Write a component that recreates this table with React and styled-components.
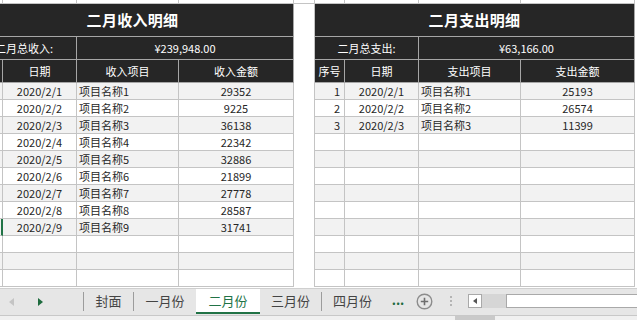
import React from 'react'
import styled, { createGlobalStyle, css } from 'styled-components'

const GlobalStyle = createGlobalStyle`
  body {
    margin: 0;
    background: #fff;
    font-family: "Noto Sans CJK SC", "Noto Sans", sans-serif;
  }
`

const income = [
  ['2020/2/1', '项目名称1', 29352],
  ['2020/2/2', '项目名称2', 9225],
  ['2020/2/3', '项目名称3', 36138],
  ['2020/2/4', '项目名称4', 22342],
  ['2020/2/5', '项目名称5', 32886],
  ['2020/2/6', '项目名称6', 21899],
  ['2020/2/7', '项目名称7', 27778],
  ['2020/2/8', '项目名称8', 28587],
  ['2020/2/9', '项目名称9', 31741],
]

const expense = [
  ['2020/2/1', '项目名称1', 25193],
  ['2020/2/2', '项目名称2', 26574],
  ['2020/2/3', '项目名称3', 11399],
]

const ROWS = 12
const LINE = '#c4c4c4'

const Page = styled.div`
  width: 637px;
  height: 320px;
  overflow: hidden;
  display: flex;
  flex-direction: column;
`

const Sheet = styled.div`
  height: 288px;
  overflow: hidden;
  display: flex;
  align-items: flex-start;
`

const LeftPane = styled.div`
  width: 294px;
  flex: none;
  overflow: hidden;
`

const Gap = styled.div`
  width: 20px;
  flex: none;
  height: 288px;
  display: flex;
  flex-direction: column;
  .strip {
    height: 3px;
    border-bottom: 1px solid ${LINE};
  }
`

const Table = styled.div`
  display: grid;
  grid-template-columns: ${p => p.$cols};
  grid-template-rows: 4px 33px 23px 23px repeat(${ROWS}, 17px);
  margin-left: ${p => p.$shift || 0}px;
  border-left: ${p => (p.$edge ? `1px solid ${LINE}` : 'none')};
  flex: none;
`

const Cell = styled.div`
  box-sizing: border-box;
  grid-column: span ${p => p.$span || 1};
  border-right: 1px solid ${LINE};
  border-bottom: 1px solid ${LINE};
  background: ${p => (p.$shade ? '#f2f2f2' : '#fff')};
  color: #262626;
  font-size: 11px;
  line-height: 16px;
  white-space: nowrap;
  overflow: hidden;
  display: flex;
  align-items: center;
  justify-content: ${p => p.$align || 'center'};
  padding: ${p => (p.$align === 'flex-end' ? '0 4px 0 0' : p.$align === 'flex-start' ? '0 0 0 2px' : '0')};
  ${p =>
    p.$dark &&
    css`
      background: #262626;
      color: #fff;
      border-color: #a6a6a6;
    `}
  ${p =>
    p.$title &&
    css`
      font-size: 15px;
      font-weight: 700;
      letter-spacing: 0.3px;
    `}
  ${p =>
    p.$active &&
    css`
      border-right: 2px solid #217346;
    `}
`

const TabBar = styled.div`
  height: 28px;
  box-sizing: border-box;
  background: #e6e6e6;
  border-top: 1px solid #cfcfcf;
  border-bottom: 1px solid #c8c8c8;
  display: flex;
  align-items: stretch;
  font-size: 13px;
  color: #444;
`

const Nav = styled.div`
  width: 83px;
  display: flex;
  align-items: center;
  gap: 22px;
  padding-left: 9px;
  box-sizing: border-box;
`

const Arrow = styled.span`
  width: 0;
  height: 0;
  border-top: 4px solid transparent;
  border-bottom: 4px solid transparent;
  ${p =>
    p.$left
      ? css`border-right: 5px solid #c4c4c4;`
      : css`border-left: 5px solid #1e6b3e; margin-left: 2px;`}
`

const Sep = styled.span`
  width: 1px;
  background: #9c9c9c;
  margin: 3px 0 4px;
`

const Tab = styled.div`
  width: ${p => p.$w}px;
  box-sizing: border-box;
  display: flex;
  align-items: center;
  justify-content: center;
  padding-bottom: 3px;
  ${p =>
    p.$active &&
    css`
      background: #fff;
      color: #217346;
      border-bottom: 2px solid #217346;
      margin-bottom: 1px;
      padding-bottom: 1px;
    `}
`

const More = styled.div`
  width: 24px;
  display: flex;
  align-items: center;
  justify-content: center;
  color: #1e6b3e;
  font-weight: 700;
  font-size: 13px;
  padding-bottom: 6px;
  margin-left: 3px;
`

const Plus = styled.div`
  width: 28px;
  display: flex;
  align-items: center;
  justify-content: center;
  padding-bottom: 2px;
`

const Dots = styled.div`
  width: 26px;
  display: flex;
  flex-direction: column;
  align-items: center;
  justify-content: center;
  gap: 2px;
  padding-bottom: 2px;
  span {
    width: 2px;
    height: 2px;
    background: #b4b4b4;
  }
`

const Scroll = styled.div`
  flex: 1;
  display: flex;
  align-items: center;
  padding-left: 4px;
  padding-bottom: 2px;
`

const ScrollBtn = styled.div`
  width: 14px;
  height: 14px;
  box-sizing: border-box;
  background: #fff;
  border: 1px solid #a9a9a9;
  display: flex;
  align-items: center;
  justify-content: center;
  &::before {
    content: '';
    border-top: 3px solid transparent;
    border-bottom: 3px solid transparent;
    border-right: 4px solid #555;
  }
`

const Thumb = styled.div`
  width: 24px;
  height: 14px;
  background: #d6d6d6;
`

const Track = styled.div`
  flex: 1;
  height: 14px;
  box-sizing: border-box;
  background: #fff;
  border: 1px solid #a9a9a9;
  border-right: none;
`

const Foot = styled.div`
  flex: 1;
  background: #f0f0f0;
  padding-left: 455px;
  span {
    display: block;
    width: 40px;
    height: 100%;
    background: #c9c9c9;
  }
`

function SheetTable({ title, label, total, item, amount, rows, cols, shift, edge, numbered }) {
  const body = []
  for (let i = 0; i < ROWS; i++) {
    const r = rows[i]
    const shade = i % 2 === 0
    body.push(
      <Cell key={`a${i}`} $shade={shade} $align="flex-end" $active={!numbered && i === 8}>
        {r && numbered ? i + 1 : ''}
      </Cell>,
      <Cell key={`b${i}`} $shade={shade}>{r ? r[0] : ''}</Cell>,
      <Cell key={`c${i}`} $shade={shade} $align="flex-start">{r ? r[1] : ''}</Cell>,
      <Cell key={`d${i}`} $shade={shade}>{r ? r[2] : ''}</Cell>
    )
  }
  return (
    <Table $cols={cols} $shift={shift} $edge={edge}>
      <Cell />
      <Cell />
      <Cell />
      <Cell />
      <Cell $span={4} $dark $title>{title}</Cell>
      <Cell $span={2} $dark>{label}</Cell>
      <Cell $span={2} $dark>{total}</Cell>
      <Cell $dark>{numbered ? '序号' : ''}</Cell>
      <Cell $dark>日期</Cell>
      <Cell $dark>{item}</Cell>
      <Cell $dark>{amount}</Cell>
      {body}
    </Table>
  )
}

export default function App() {
  return (
    <Page>
      <GlobalStyle />
      <Sheet>
        <LeftPane>
          <SheetTable
            title="二月收入明细"
            label="二月总收入:"
            total="¥239,948.00"
            item="收入项目"
            amount="收入金额"
            rows={income}
            cols="31px 74px 102px 115px"
            shift={-28}
          />
        </LeftPane>
        <Gap>
          <div className="strip" />
        </Gap>
        <SheetTable
          title="二月支出明细"
          label="二月总支出:"
          total="¥63,166.00"
          item="支出项目"
          amount="支出金额"
          rows={expense}
          cols="30px 74px 102px 114px"
          edge
          numbered
        />
      </Sheet>
      <TabBar>
        <Nav>
          <Arrow $left />
          <Arrow />
        </Nav>
        <Sep />
        <Tab $w={49}>封面</Tab>
        <Sep />
        <Tab $w={62}>一月份</Tab>
        <Tab $w={64} $active>二月份</Tab>
        <Tab $w={61}>三月份</Tab>
        <Sep />
        <Tab $w={61}>四月份</Tab>
        <More>...</More>
        <Plus>
          <svg width="17" height="17" viewBox="0 0 17 17">
            <circle cx="8.5" cy="8.5" r="7.3" fill="none" stroke="#8c8c8c" strokeWidth="1.4" />
            <path d="M8.5 4.8v7.4M4.8 8.5h7.4" stroke="#6e6e6e" strokeWidth="1.6" />
          </svg>
        </Plus>
        <Dots>
          <span />
          <span />
          <span />
        </Dots>
        <Scroll>
          <ScrollBtn />
          <Thumb />
          <Track />
        </Scroll>
      </TabBar>
      <Foot>
        <span />
      </Foot>
    </Page>
  )
}
